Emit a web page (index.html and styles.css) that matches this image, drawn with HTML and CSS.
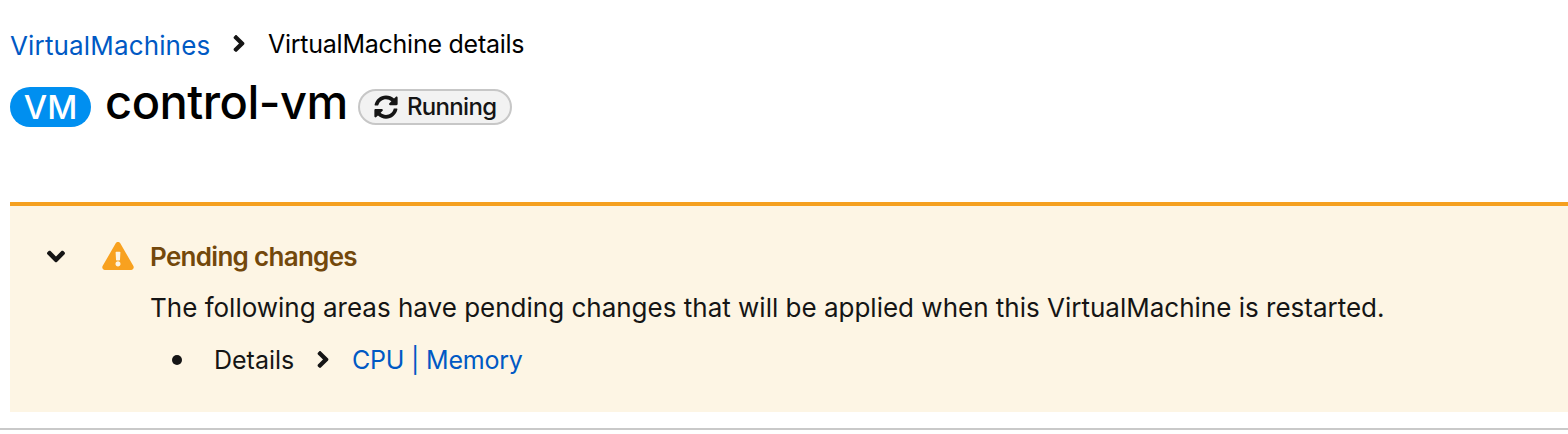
FILE: index.html
```html
<!DOCTYPE html>
<html lang="en">
<head>
<meta charset="utf-8">
<title>control-vm</title>
<link rel="stylesheet" href="styles.css">
</head>
<body>
<svg class="defs" width="0" height="0">
  <symbol id="angle-right" viewBox="0 0 256 512"><path d="M224.3 273l-136 136c-9.4 9.4-24.6 9.4-33.9 0l-22.6-22.6c-9.4-9.4-9.4-24.6 0-33.9l96.4-96.4-96.4-96.4c-9.4-9.4-9.4-24.6 0-33.9L54.3 103c9.4-9.4 24.6-9.4 33.9 0l136 136c9.5 9.4 9.5 24.6.1 34z"/></symbol>
</svg>
<header class="page-header">
  <nav class="breadcrumb">
    <a class="link breadcrumb-link" href="#">VirtualMachines</a>
    <svg class="angle-right"><use href="#angle-right"/></svg>
    <span class="breadcrumb-current">VirtualMachine details</span>
  </nav>
  <div class="title-row">
    <span class="kind-badge">VM</span>
    <h1 class="title">control-vm</h1>
    <span class="status">
      <svg class="sync" viewBox="0 0 512 512"><path d="M370.72 133.28C339.458 104.008 298.888 87.962 255.848 88c-77.458.068-144.328 53.178-162.791 126.85-1.344 5.363-6.122 9.15-11.651 9.15H24.103c-7.498 0-13.194-6.807-11.807-14.176C33.933 94.924 134.813 8 256 8c66.448 0 126.791 26.136 171.315 68.685L463.03 40.97C478.149 25.851 504 36.559 504 57.941V192c0 13.255-10.745 24-24 24H345.941c-21.382 0-32.09-25.851-16.971-40.971l41.75-41.749zM32 296h134.059c21.382 0 32.09 25.851 16.971 40.971l-41.75 41.75c31.262 29.273 71.835 45.319 114.876 45.28 77.418-.07 144.315-53.144 162.787-126.849 1.344-5.363 6.122-9.15 11.651-9.15h57.304c7.498 0 13.194 6.807 11.807 14.176C478.067 417.076 377.187 504 256 504c-66.448 0-126.791-26.136-171.315-68.685L48.97 471.03C33.851 486.149 8 475.441 8 454.059V320c0-13.255 10.745-24 24-24z"/></svg>
      <span class="status-text">Running</span>
    </span>
  </div>
</header>
<section class="alert">
  <svg class="angle-down" viewBox="0 0 320 512"><path d="M143 352.3L7 216.3c-9.4-9.4-9.4-24.6 0-33.9l22.6-22.6c9.4-9.4 24.6-9.4 33.9 0l96.4 96.4 96.4-96.4c9.4-9.4 24.6-9.4 33.9 0l22.6 22.6c9.4 9.4 9.4 24.6 0 33.9l-136 136c-9.2 9.4-24.4 9.4-33.8 0z"/></svg>
  <svg class="warning" viewBox="0 0 576 512"><path d="M569.517 440.013C587.975 472.007 564.806 512 527.94 512H48.054c-36.937 0-59.999-40.055-41.577-71.987L246.423 23.985c18.467-32.009 64.72-31.951 83.154 0l239.94 416.028zM288 354c-25.405 0-46 20.595-46 46s20.595 46 46 46 46-20.595 46-46-20.595-46-46-46zm-43.673-165.346l7.418 136c.347 6.364 5.609 11.346 11.982 11.346h48.546c6.373 0 11.635-4.982 11.982-11.346l7.418-136c.375-6.874-5.098-12.654-11.982-12.654h-63.383c-6.884 0-12.356 5.78-11.981 12.654z"/></svg>
  <div class="alert-body">
    <h2 class="alert-title">Pending changes</h2>
    <p class="alert-text">The following areas have pending changes that will be applied when this VirtualMachine is restarted.</p>
    <div class="change-item">
      <span class="bullet"></span>
      <span class="change-area">Details</span>
      <svg class="angle-right"><use href="#angle-right"/></svg>
      <a class="link change-link" href="#">CPU | Memory</a>
    </div>
  </div>
</section>
<hr class="divider">
</body>
</html>
```
FILE: styles.css
```css
* { box-sizing: border-box; }
body {
  margin: 0;
  height: 434px;
  overflow: hidden;
  background: #fff;
  color: #151515;
  font-family: Inter, "Liberation Sans", sans-serif;
  font-size: 26px;
  line-height: 40px;
  white-space: nowrap;
}
svg { display: block; flex: none; fill: currentColor; }
.defs { display: none; }
h1, h2, p { margin: 0; }
.link { color: #0059c4; text-decoration: none; }

.page-header { height: 202px; padding: 23px 0 0 10px; }
.breadcrumb { display: flex; height: 40px; color: #000; }
.breadcrumb-link { width: 222px; padding-top: 3px; letter-spacing: 0.15px; }
.breadcrumb .angle-right { margin-top: 7px; color: #151515; }
.breadcrumb-current { margin-left: 22px; padding-top: 1px; font-size: 25px; letter-spacing: -0.25px; }
.angle-right { width: 14px; height: 27px; }

.title-row { display: flex; align-items: flex-start; padding-top: 17px; }
.kind-badge {
  width: 81px;
  height: 40px;
  margin-top: 7px;
  border-radius: 20px;
  background: #008ff0;
  color: #fff;
  font-size: 33px;
  font-weight: 500;
  text-align: center;
}
.title {
  width: 253px;
  margin-left: 14px;
  color: #000;
  font-size: 47px;
  font-weight: 500;
  line-height: 44px;
  letter-spacing: -0.5px;
}
.status {
  display: flex;
  align-items: center;
  width: 154px;
  height: 36px;
  margin-top: 9px;
  padding-left: 14px;
  border: 2px solid #c7c7c7;
  border-radius: 18px;
  background: #f2f2f2;
  font-size: 24px;
  font-weight: 500;
  letter-spacing: -0.7px;
}
.sync { width: 24px; height: 24px; margin-right: 9px; }

.alert {
  display: flex;
  height: 210px;
  margin-left: 10px;
  padding: 31px 0 0 37px;
  border-top: 4px solid #f5a01f;
  background: #fdf5e4;
}
.angle-down { width: 18px; height: 29px; margin-top: 5px; }
.warning { width: 32px; height: 28px; margin: 5px 16px 0 37px; color: #f8a11f; }
.alert-title { color: #73480b; font-size: 26px; font-weight: 600; letter-spacing: -0.7px; }
.alert-text { padding-top: 11px; }
.change-item { display: flex; padding: 12px 0 0 22px; font-size: 25px; }
.bullet { width: 10px; height: 10px; margin: 15px 32px 0 0; border-radius: 50%; background: #151515; }
.change-area { width: 102px; }
.change-item .angle-right { margin-top: 6px; }
.change-link { margin-left: 22px; letter-spacing: -0.2px; }

.divider { height: 2px; margin: 16px 0 0; border: 0; background: #c9c9c9; }
```
